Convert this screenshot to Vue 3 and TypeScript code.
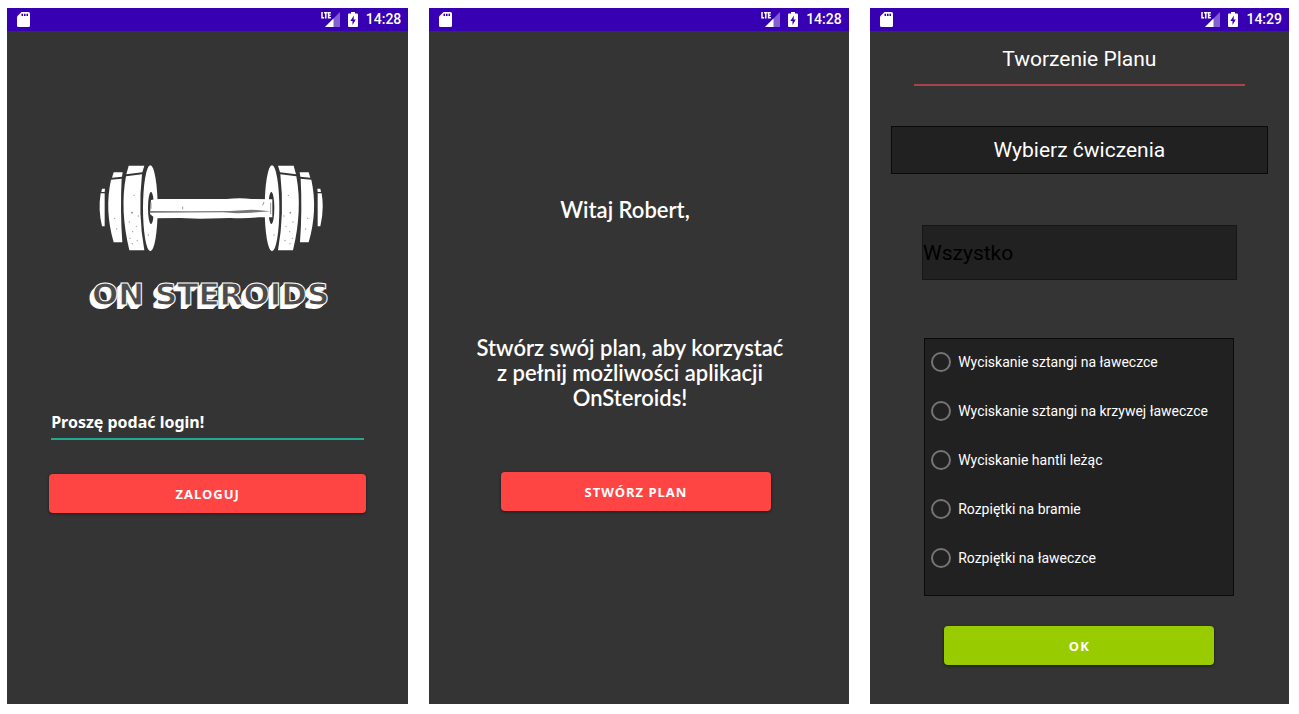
<script setup lang="ts">
import { ref } from 'vue'

interface Screen {
  id: 'login' | 'welcome' | 'plan'
  time: string
}

const screens: Screen[] = [
  { id: 'login', time: '14:28' },
  { id: 'welcome', time: '14:28' },
  { id: 'plan', time: '14:29' },
]

const exercises: string[] = [
  'Wyciskanie sztangi na ławeczce',
  'Wyciskanie sztangi na krzywej ławeczce',
  'Wyciskanie hantli leżąc',
  'Rozpiętki na bramie',
  'Rozpiętki na ławeczce',
]

const login = ref('')
const category = ref('Wszystko')
const chosen = ref('')
</script>

<template>
  <main class="board">
    <section v-for="screen in screens" :key="screen.id" class="phone">
      <header class="status">
        <svg class="card-icon" viewBox="0 0 13 15" aria-hidden="true">
          <path d="M4.500 0H11.500Q13 0 13 1.500V13.500Q13 15 11.500 15H1.500Q0 15 0 13.500V4.500Z" fill="#fff" />
          <path d="M4.500 1.700h1.600v2.300H4.500zM7 1.700h1.600v2.300H7zM9.500 1.700H11v2.300H9.500z" fill="#3700b3" />
        </svg>
        <span class="indicators">
          <svg class="signal-icon" viewBox="0 0 19 15" aria-hidden="true">
            <path d="M19 0V15H4Z" fill="#8260cf" />
            <path d="M12.500 6.500V15H4Z" fill="#fff" />
            <path d="M0 0H10.500V7H0Z" fill="#3700b3" />
            <path d="M1 0V5.700H3.200M3 .8H6.600M4.800 .8V6.400M9.900 .8H7.600V5.700H9.900M7.600 3.200H9.600" fill="none" stroke="#fff" stroke-width="1.500" />
          </svg>
          <svg class="battery-icon" viewBox="0 0 10 15" aria-hidden="true">
            <path d="M3 0H7V1.500H9Q10 1.500 10 2.500V14Q10 15 9 15H1Q0 15 0 14V2.500Q0 1.500 1 1.500H3Z" fill="#fff" />
            <path d="M6 3.500L2.300 9H4.500V13L7.800 7.500H5.600Z" fill="#3700b3" />
          </svg>
          <time class="clock">{{ screen.time }}</time>
        </span>
      </header>

      <form v-if="screen.id === 'login'" class="login" @submit.prevent>
        <div class="brand">
          <svg class="dumbbell" viewBox="54 42 678 264" aria-hidden="true">
            <g id="weights" fill="#fff">
              <path d="M66 116H75L74 126H64ZM62 130H74V229H66Q54 180 62 130Z" />
              <path d="M101 67H128L126 80L96 83ZM93 89L125 86Q120 180 127 277H101Q73 180 93 89Z" />
              <path d="M146 47H193L187 67L139 73ZM138 79L186 73Q173 190 193 301H148Q119 180 138 79Z" />
              <ellipse cx="211" cy="175" rx="22" ry="129" />
              <ellipse cx="213" cy="174" rx="9" ry="48" fill="#343434" />
              <g fill="#999">
                <circle cx="156" cy="188" r="3" /><circle cx="148" cy="216" r="2" />
                <circle cx="169" cy="229" r="2" /><circle cx="158" cy="245" r="2" />
                <circle cx="150" cy="265" r="2" /><circle cx="172" cy="272" r="2" />
                <circle cx="162" cy="136" r="2" /><circle cx="175" cy="198" r="2" />
                <circle cx="110" cy="237" r="2" /><circle cx="104" cy="205" r="2" />
                <circle cx="157" cy="281" r="2" /><circle cx="205" cy="255" r="2" />
              </g>
            </g>
            <use href="#weights" transform="matrix(-1 0 0 1 787 0)" />
            <path d="M213 150Q222 147 240 147L440 147Q480 142 515 147L577 148V202L535 202Q500 206 450 204L360 206L300 204L225 205L210 192Z" fill="#fff" />
            <path d="M209 183L330 184L450 183L515 179L572 184L515 188L470 190L430 187L210 188Z" fill="#777" />
            <path d="M213 158V176M572 158V192M308 170V178M552 156L548 166" stroke="#999" stroke-width="3" />
          </svg>
          <h1 class="name">ON STEROIDS</h1>
        </div>
        <input v-model="login" class="login-field" type="text" aria-label="Login" placeholder="Proszę podać login!" />
        <button class="action wide" type="submit">ZALOGUJ</button>
      </form>

      <div v-else-if="screen.id === 'welcome'" class="welcome">
        <h2 class="greeting">Witaj Robert,</h2>
        <p class="invitation">Stwórz swój plan, aby korzystać<br />z pełnij możliwości aplikacji<br />OnSteroids!</p>
        <button class="action start" type="button">STWÓRZ PLAN</button>
      </div>

      <form v-else class="plan" @submit.prevent>
        <h2 class="plan-title">Tworzenie Planu</h2>
        <h3 class="plan-step">Wybierz ćwiczenia</h3>
        <select v-model="category" class="category" aria-label="Kategoria">
          <option>Wszystko</option>
        </select>
        <div class="exercises" role="radiogroup" aria-label="Wybierz ćwiczenia">
          <label v-for="exercise in exercises" :key="exercise" class="exercise">
            <input v-model="chosen" class="radio" type="radio" name="exercise" :value="exercise" />
            <span>{{ exercise }}</span>
          </label>
        </div>
        <button class="action confirm" type="submit">OK</button>
      </form>
    </section>
  </main>
</template>

<style>
body {
  margin: 0;
  background: #fff;
}
</style>

<style scoped>
.board {
  box-sizing: border-box;
  min-height: 100vh;
  padding: 8px 10px 10px 7px;
  display: grid;
  grid-template-columns: 401fr 419fr 419fr;
  gap: 21px;
  font-family: Roboto, "Noto Sans", sans-serif;
}

.phone {
  display: flex;
  flex-direction: column;
  min-width: 0;
  background: #343434;
  color: #fff;
}

.status {
  display: flex;
  align-items: center;
  justify-content: space-between;
  height: 23px;
  padding: 0 7px 0 10px;
  background: #3700b3;
}

.indicators {
  display: flex;
  align-items: center;
  gap: 8px;
}

.card-icon {
  width: 13px;
  height: 15px;
}

.signal-icon {
  width: 19px;
  height: 15px;
}

.battery-icon {
  width: 10px;
  height: 15px;
}

.clock {
  font-size: 14px;
  line-height: 23px;
  font-weight: 500;
}

.login,
.welcome,
.plan {
  display: flex;
  flex-direction: column;
  align-items: center;
}

.brand {
  display: flex;
  flex-direction: column;
  align-items: center;
  padding: 133px 0 0 6px;
}

.dumbbell {
  width: 226px;
  height: 88px;
}

.name {
  margin: 23px 0 0;
  font: bold 31px/38px "DejaVu Sans", sans-serif;
  color: #4c4c4c;
  -webkit-text-stroke: 1px #fff;
  text-shadow: -1px 1px #fff, -2px 2px #fff, -3px 3px #fff, -4px 4px #fff;
}

.login-field {
  box-sizing: border-box;
  width: 78%;
  height: 32px;
  margin: 95px 0 0;
  padding: 0 0 2px;
  border: 0;
  border-bottom: 2px solid #1fa993;
  outline: 0;
  background: transparent;
  color: #fff;
  font: bold 16px/28px "Noto Sans", sans-serif;
}

.login-field::placeholder {
  color: #fff;
  opacity: 1;
}

.action {
  width: 270px;
  max-width: 100%;
  height: 39px;
  padding: 0;
  border: 0;
  border-radius: 4px;
  background: #ff4444;
  color: #fff;
  font: bold 13px/18px "Noto Sans", sans-serif;
  letter-spacing: 1px;
  box-shadow: 0 1px 3px rgba(0, 0, 0, 0.5);
}

.wide {
  width: 79%;
  margin-top: 34px;
}

.start {
  margin-right: 6px;
}

.greeting {
  margin: 166px 28px 0 0;
  font: 600 22px/25px Lato, sans-serif;
}

.invitation {
  margin: 113px 18px 62px 0;
  text-align: center;
  font: 600 22px/25px Lato, sans-serif;
}

.plan-title {
  box-sizing: border-box;
  width: 79%;
  height: 55px;
  margin: 0;
  padding-top: 16px;
  border-bottom: 2px solid #a84349;
  text-align: center;
  font-size: 21px;
  line-height: 25px;
  font-weight: 400;
}

.plan-step {
  box-sizing: border-box;
  width: 90%;
  margin: 40px 0 0;
  padding-top: 1px;
  border: 1px solid #0a0a0a;
  background: #212121;
  text-align: center;
  font-size: 21px;
  line-height: 45px;
  font-weight: 400;
}

.category {
  appearance: none;
  box-sizing: border-box;
  width: 75%;
  height: 55px;
  margin: 51px 0 0;
  padding: 2px 0 0;
  border: 1px solid #161616;
  border-radius: 0;
  background: #212121;
  color: #000;
  font: 21px/25px Roboto, sans-serif;
}

.exercises {
  box-sizing: border-box;
  display: flex;
  flex-direction: column;
  gap: 4px;
  width: 74%;
  margin-top: 58px;
  padding: 0 0 15px 6px;
  border: 1px solid #0a0a0a;
  background: #212121;
}

.exercise {
  display: flex;
  align-items: center;
  gap: 7px;
  height: 45px;
  font-size: 14px;
  line-height: 18px;
  white-space: nowrap;
}

.radio {
  appearance: none;
  flex: none;
  box-sizing: border-box;
  width: 20px;
  height: 20px;
  margin: 0;
  border: 2px solid #757575;
  border-radius: 50%;
}

.radio:checked {
  background: radial-gradient(circle, #99cc00 5px, transparent 6px);
}

.confirm {
  margin-top: 30px;
  background: #99cc00;
}
</style>
